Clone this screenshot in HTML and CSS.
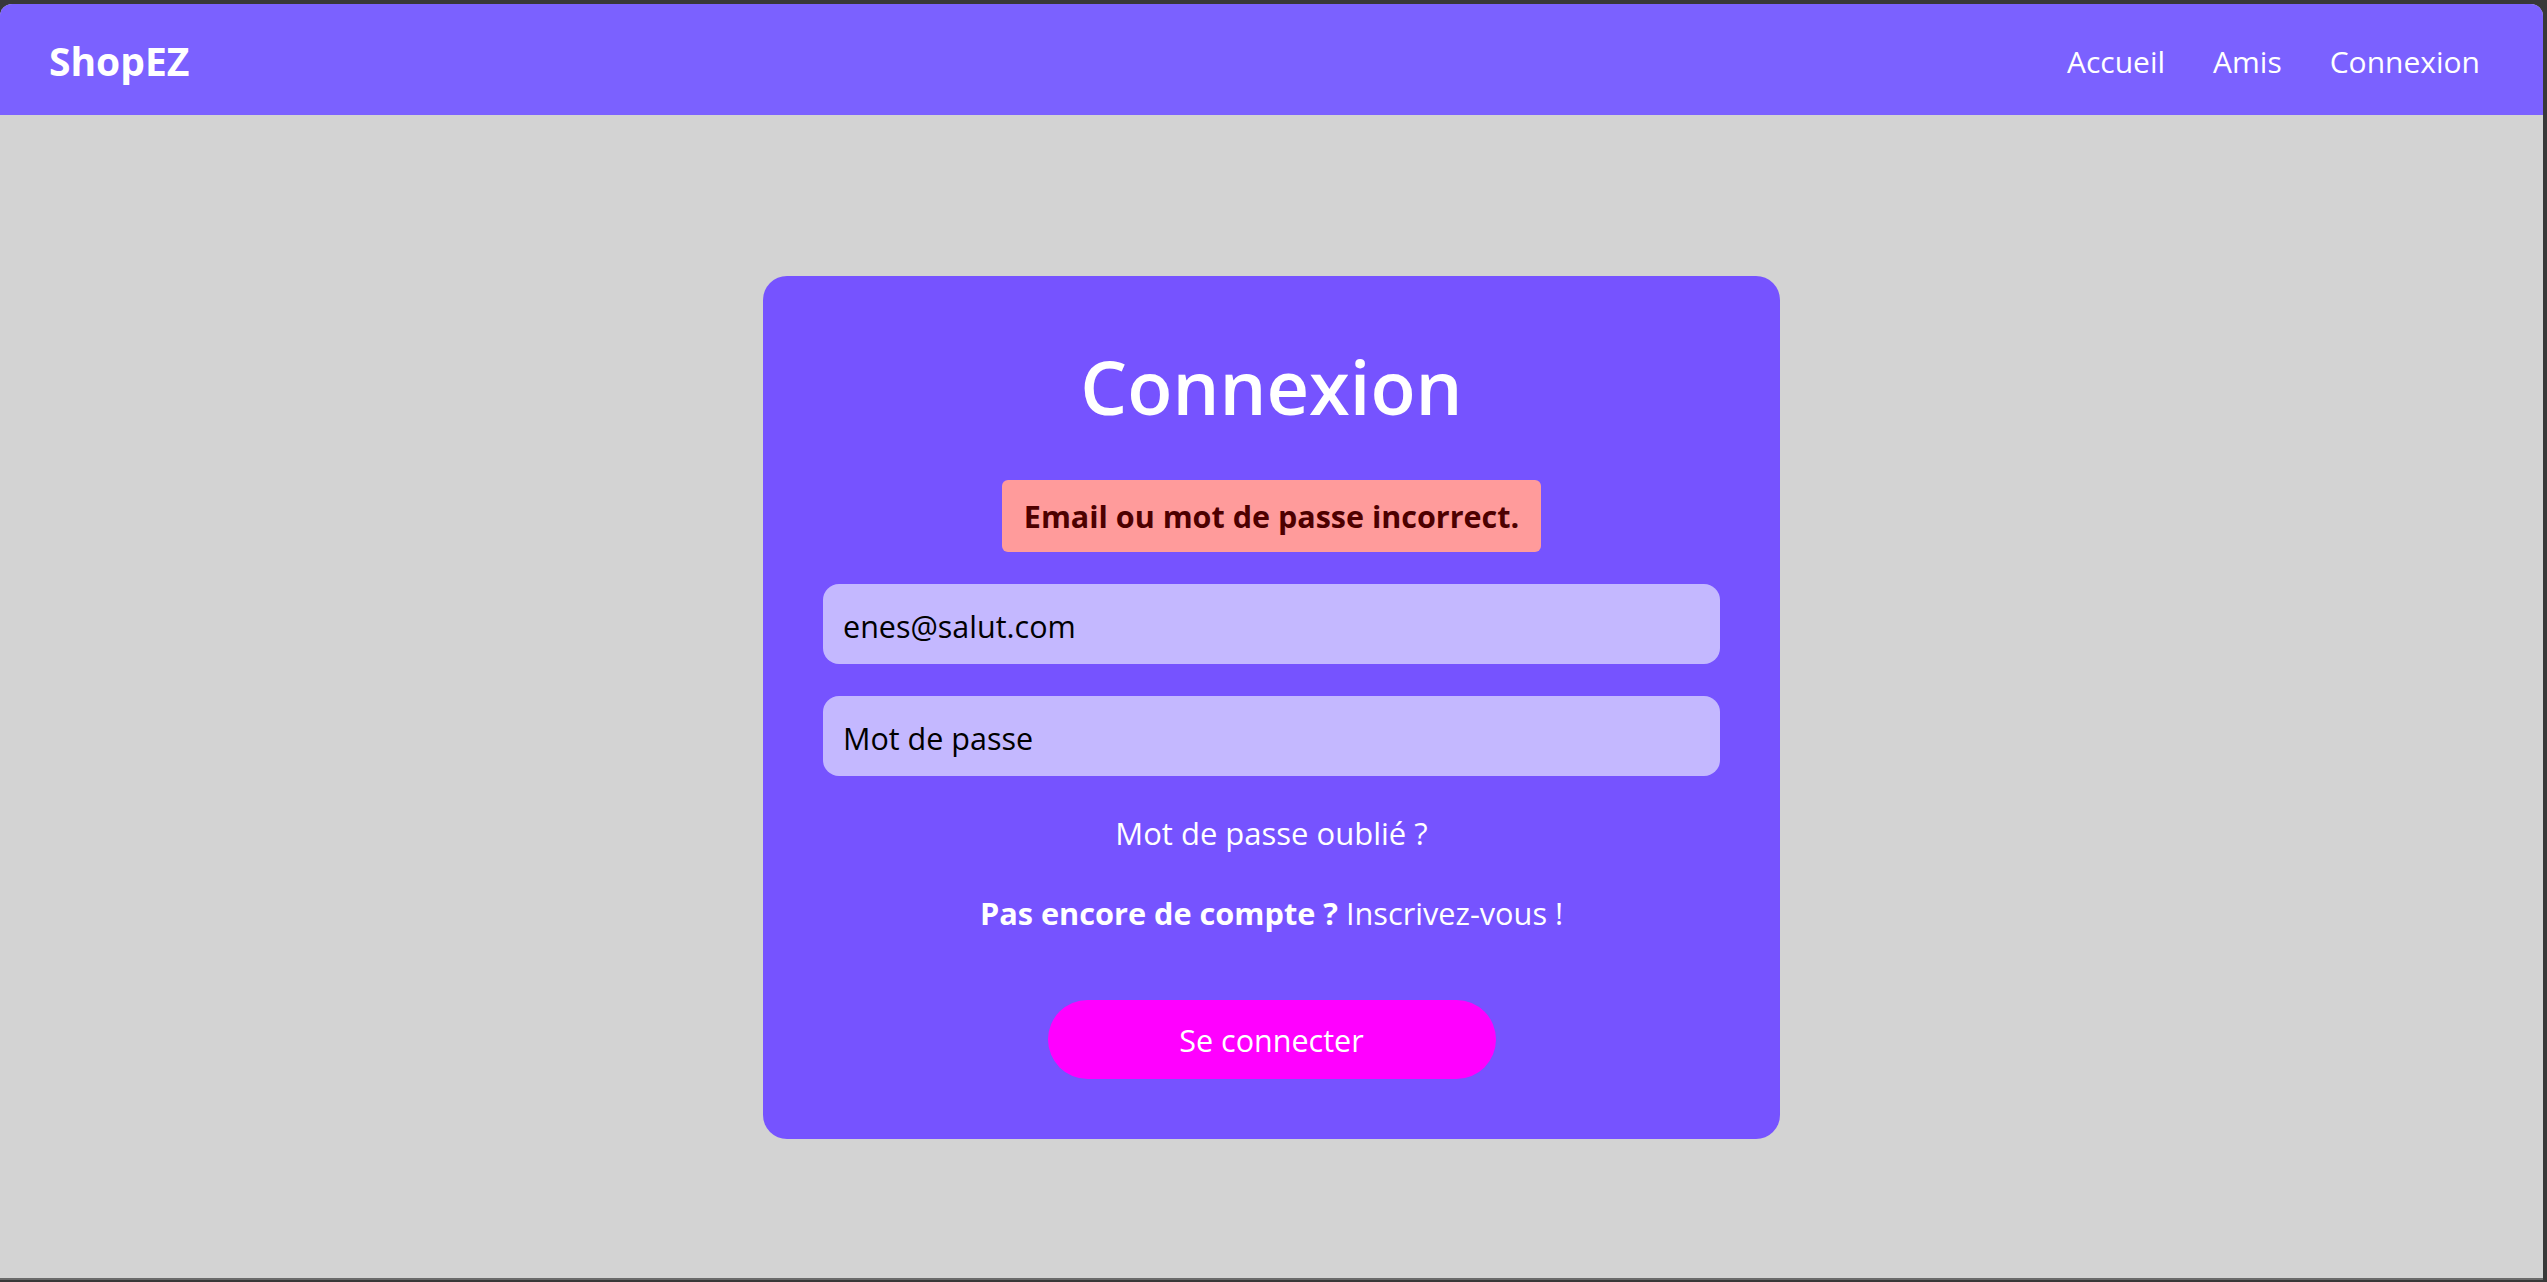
FILE: index.html
```html
<!DOCTYPE html>
<html lang="fr">
<head>
<meta charset="utf-8">
<title>ShopEZ - Connexion</title>
<link rel="stylesheet" href="styles.css">
</head>
<body>
<div class="app">
  <header class="navbar">
    <a class="brand" href="#">ShopEZ</a>
    <nav class="nav-links">
      <a href="#">Accueil</a>
      <a href="#">Amis</a>
      <a href="#">Connexion</a>
    </nav>
  </header>
  <main class="main">
    <form class="login-card">
      <h1 class="login-title">Connexion</h1>
      <div class="error-box">Email ou mot de passe incorrect.</div>
      <input class="field" type="email" value="enes@salut.com">
      <input class="field" type="password" placeholder="Mot de passe">
      <a class="forgot" href="#">Mot de passe oublié ?</a>
      <p class="signup"><strong>Pas encore de compte ?</strong> <a href="#">Inscrivez-vous !</a></p>
      <button class="submit" type="button">Se connecter</button>
    </form>
  </main>
</div>
</body>
</html>
```
FILE: styles.css
```css
html, body {
  margin: 0;
  height: 100%;
}
body {
  background: #383838;
  padding: 4px 4px 2px 0;
  box-sizing: border-box;
  font-family: "Open Sans", "Noto Sans", sans-serif;
}
.app {
  height: 100%;
  background: #d3d3d3;
  border-radius: 12px 12px 0 0;
  overflow: hidden;
  display: flex;
  flex-direction: column;
  border-bottom: 2px solid #6a6a6a;
  box-sizing: border-box;
}
.navbar {
  height: 111px;
  flex: 0 0 auto;
  box-sizing: border-box;
  background: #7b61ff;
  display: flex;
  align-items: center;
  justify-content: space-between;
  padding: 2px 63px 0 49px;
}
.brand {
  color: #fff;
  text-decoration: none;
  font-weight: 700;
  font-size: 39px;
  line-height: 1;
}
.nav-links {
  display: flex;
  gap: 48px;
  padding-top: 2px;
}
.nav-links a {
  color: #fff;
  text-decoration: none;
  font-size: 30px;
  line-height: 1;
}
.main {
  flex: 1;
  display: flex;
  justify-content: center;
  align-items: flex-start;
}
.login-card {
  margin-top: 161px;
  width: 1017px;
  box-sizing: border-box;
  background: #7653ff;
  border-radius: 24px;
  padding: 72px 60px 60px;
  display: flex;
  flex-direction: column;
  align-items: center;
  text-align: center;
  color: #fff;
}
.login-title {
  margin: 0;
  font-size: 74px;
  font-weight: 600;
  line-height: 77px;
}
.error-box {
  margin-top: 55px;
  background: #ff9b9b;
  color: #4d0000;
  font-weight: 700;
  font-size: 30.5px;
  line-height: 31px;
  padding: 21px 22px 20px;
  border-radius: 6px;
}
.field {
  margin-top: 32px;
  width: 100%;
  height: 80px;
  box-sizing: border-box;
  border: none;
  outline: none;
  background: #c4b8ff;
  border-radius: 16px;
  padding: 4px 20px 0;
  font-family: inherit;
  font-size: 30.5px;
  color: #000;
}
.field::placeholder {
  color: #000;
  opacity: 1;
}
.forgot {
  margin-top: 42px;
  color: #fff;
  text-decoration: none;
  font-size: 31px;
  line-height: 31px;
}
.signup {
  margin: 49px 0 0;
  font-size: 30.7px;
  line-height: 31px;
}
.signup strong {
  font-weight: 700;
}
.signup a {
  color: #fff;
  text-decoration: none;
}
.submit {
  margin-top: 71px;
  width: 448px;
  height: 79px;
  border: none;
  border-radius: 40px;
  background: #ff00ff;
  color: #fff;
  font-family: inherit;
  font-size: 30.5px;
  cursor: pointer;
}
```
